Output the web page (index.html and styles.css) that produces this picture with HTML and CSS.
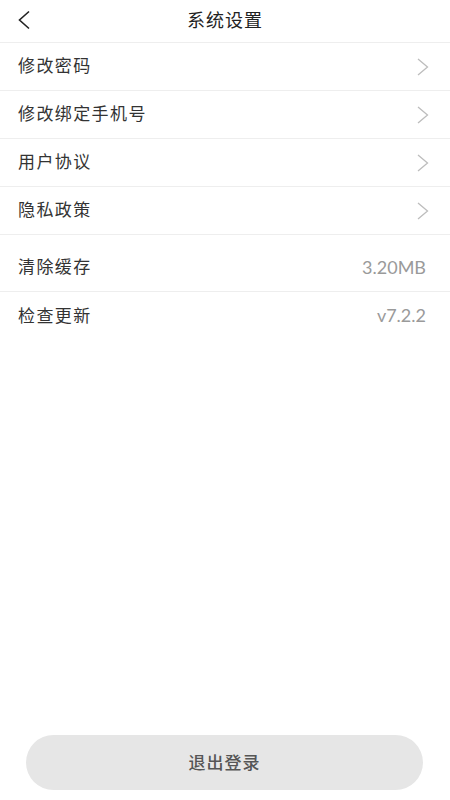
FILE: index.html
```html
<!DOCTYPE html>
<html lang="zh">
<head>
<meta charset="utf-8">
<link rel="stylesheet" href="styles.css">
</head>
<body>
<div class="page">
  <header class="topbar">
    <span class="back">
      <svg width="14" height="20" viewBox="0 0 14 20"><path d="M12 1.5 L2.5 10 L12 18.5" fill="none" stroke="#222" stroke-width="1.6"/></svg>
    </span>
    <h1 class="title">系统设置</h1>
  </header>
  <div class="group">
    <div class="row"><span class="label">修改密码</span><svg class="chev" width="12" height="18" viewBox="0 0 12 18"><path d="M1 1 L10.5 9 L1 17" fill="none" stroke="#bdbdbd" stroke-width="1.3"/></svg></div>
    <div class="row"><span class="label">修改绑定手机号</span><svg class="chev" width="12" height="18" viewBox="0 0 12 18"><path d="M1 1 L10.5 9 L1 17" fill="none" stroke="#bdbdbd" stroke-width="1.3"/></svg></div>
    <div class="row"><span class="label">用户协议</span><svg class="chev" width="12" height="18" viewBox="0 0 12 18"><path d="M1 1 L10.5 9 L1 17" fill="none" stroke="#bdbdbd" stroke-width="1.3"/></svg></div>
    <div class="row"><span class="label">隐私政策</span><svg class="chev" width="12" height="18" viewBox="0 0 12 18"><path d="M1 1 L10.5 9 L1 17" fill="none" stroke="#bdbdbd" stroke-width="1.3"/></svg></div>
  </div>
  <div class="group group2">
    <div class="row"><span class="label">清除缓存</span><span class="value">3.20MB</span></div>
    <div class="row last"><span class="label">检查更新</span><span class="value">v7.2.2</span></div>
  </div>
  <div class="spacer"></div>
  <div class="footer">
    <button class="logout">退出登录</button>
  </div>
</div>
</body>
</html>
```
FILE: styles.css
```css
* { box-sizing: border-box; }
html, body { margin: 0; padding: 0; background: #fff; }
body {
  font-family: "Noto Sans CJK SC", "Noto Sans", sans-serif;
  color: #333;
}
.page {
  width: 450px;
  height: 800px;
  display: flex;
  flex-direction: column;
}
.topbar {
  height: 43px;
  border-bottom: 1px solid #eeeeee;
  display: flex;
  align-items: center;
  justify-content: center;
  position: relative;
}
.back {
  position: absolute;
  left: 17px;
  top: 10px;
  display: flex;
}
.title {
  margin: 0;
  font-size: 18px;
  font-weight: 400;
  color: #222;
  letter-spacing: 1px;
  line-height: 1;
  margin-top: -5px;
}
.group { display: flex; flex-direction: column; }
.group2 { padding-top: 9px; }
.row {
  height: 48px;
  border-bottom: 1px solid #eeeeee;
  display: flex;
  align-items: center;
  justify-content: space-between;
  padding: 0 22px 4px 18px;
}
.row.last { border-bottom: none; }
.label {
  font-size: 17px;
  letter-spacing: 1.4px;
  color: #333;
}
.chev { margin-right: -1px; margin-top: 4px; }
.value {
  font-family: "Lato", "Noto Sans", sans-serif;
  font-size: 18px;
  color: #9a9a9a;
  margin-right: 2px;
  margin-top: 2px;
}
.spacer { flex: 1; }
.footer {
  padding: 0 27px 10px 26px;
}
.logout {
  width: 100%;
  height: 55px;
  border: none;
  border-radius: 28px;
  background: #e6e6e6;
  color: #555;
  font-family: "Noto Sans CJK SC", sans-serif;
  font-size: 17px;
  font-weight: 500;
  letter-spacing: 1px;
  padding-bottom: 4px;
}
```
